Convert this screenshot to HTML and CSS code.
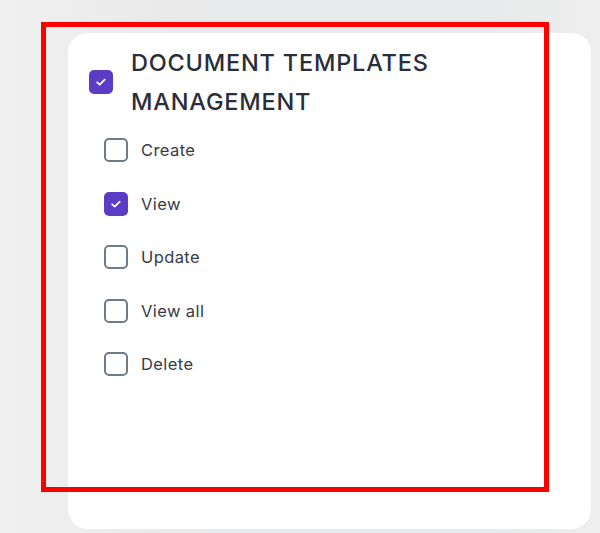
FILE: index.html
```html
<!DOCTYPE html>
<html>
<head>
<meta charset="utf-8">
<link rel="stylesheet" href="styles.css">
</head>
<body>
<div class="card">
  <div class="group">
    <span class="box box-lg checked">
      <svg viewBox="0 0 24 24" width="24" height="24"><path d="M8.2 12.3l2.5 2.4 5-5" fill="none" stroke="#fff" stroke-width="1.8" stroke-linecap="round" stroke-linejoin="round"/></svg>
    </span>
    <h2 class="title">DOCUMENT TEMPLATES MANAGEMENT</h2>
  </div>
  <ul class="perms">
    <li class="perm"><span class="box"></span><span class="label">Create</span></li>
    <li class="perm"><span class="box checked"><svg viewBox="0 0 24 24" width="24" height="24"><path d="M8.2 12.3l2.5 2.4 5-5" fill="none" stroke="#fff" stroke-width="1.8" stroke-linecap="round" stroke-linejoin="round"/></svg></span><span class="label">View</span></li>
    <li class="perm"><span class="box"></span><span class="label">Update</span></li>
    <li class="perm"><span class="box"></span><span class="label">View all</span></li>
    <li class="perm"><span class="box"></span><span class="label">Delete</span></li>
  </ul>
</div>
<div class="highlight"></div>
</body>
</html>
```

FILE: styles.css
```css
html, body {
  margin: 0;
  padding: 0;
}
body {
  width: 600px;
  height: 533px;
  background: linear-gradient(90deg, #f0f0f0 0%, #e9e9ea 30%, #e8e9ea 80%, #eeeeee 100%);
  font-family: "Inter", "Liberation Sans", sans-serif;
  position: relative;
  overflow: hidden;
  padding-top: 33px;
  box-sizing: border-box;
}
.card {
  margin-left: 68px;
  width: 523px;
  height: 496px;
  background: #ffffff;
  border-radius: 20px;
  box-sizing: border-box;
  padding: 10px 0 0 21px;
}
.group {
  display: flex;
  align-items: center;
  gap: 18px;
}
.title {
  margin: 0;
  font-size: 23.5px;
  line-height: 39px;
  font-weight: 500;
  color: #2a2e39;
  width: 340px;
  letter-spacing: 0.8px;
}
.box {
  width: 24px;
  height: 24px;
  box-sizing: border-box;
  border: 2px solid #6f7b86;
  border-radius: 5px;
  display: inline-flex;
  align-items: center;
  justify-content: center;
  flex: none;
}
.box svg {
  display: block;
  flex: none;
}
.box.checked {
  background: #5b3cc4;
  border-color: #5b3cc4;
}
.box-lg {
  width: 24px;
  height: 24px;
}
.perms {
  list-style: none;
  margin: 17px 0 0 15px;
  padding: 0;
  display: flex;
  flex-direction: column;
  gap: 29.5px;
}
.perm {
  display: flex;
  align-items: center;
  gap: 13px;
}
.label {
  font-size: 16.5px;
  line-height: 24px;
  color: #363b47;
  letter-spacing: 0.4px;
}
.highlight {
  position: absolute;
  left: 41px;
  top: 22px;
  width: 508px;
  height: 470px;
  box-sizing: border-box;
  border: 5px solid #ff0000;
  pointer-events: none;
}
```
